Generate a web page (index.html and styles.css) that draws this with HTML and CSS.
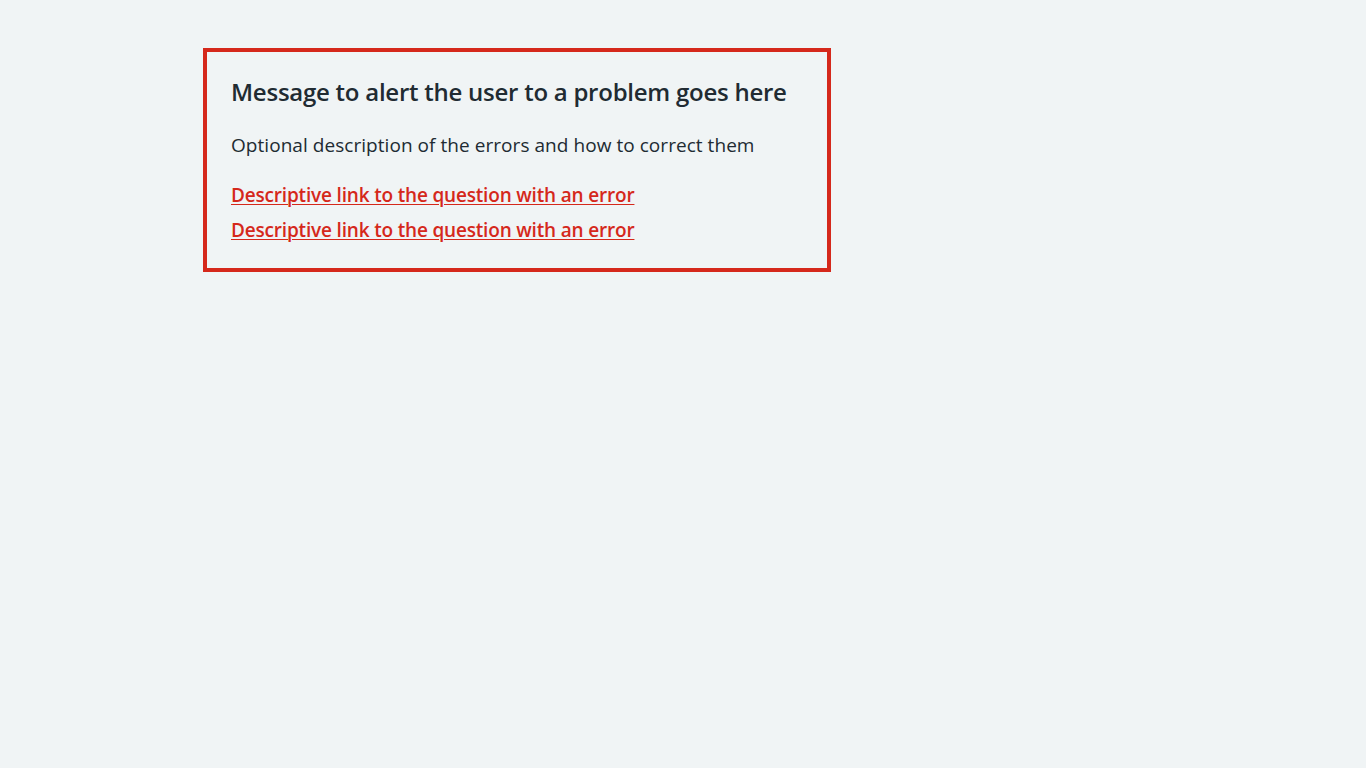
FILE: index.html
```html
<!DOCTYPE html>
<html lang="en">
<head>
<meta charset="utf-8">
<title>Error summary</title>
<link rel="stylesheet" href="styles.css">
</head>
<body>
<div class="width-container">
  <main class="main-wrapper">
    <div class="error-summary" role="alert" tabindex="-1">
      <h2 class="error-summary__title">Message to alert the user to a problem goes here</h2>
      <div class="error-summary__body">
        <p class="error-summary__text">Optional description of the errors and how to correct them</p>
        <ul class="error-summary__list">
          <li><a href="#" class="error-summary__link">Descriptive link to the question with an error</a></li>
          <li><a href="#" class="error-summary__link">Descriptive link to the question with an error</a></li>
        </ul>
      </div>
    </div>
  </main>
</div>
</body>
</html>
```
FILE: styles.css
```css
html, body {
  margin: 0;
  padding: 0;
  background: #f0f4f5;
}
body {
  font-family: "Open Sans", Lato, "Liberation Sans", sans-serif;
  color: #212b32;
}
.width-container {
  max-width: 960px;
  margin: 0 auto;
}
.main-wrapper {
  display: block;
  padding-top: 48px;
}
.error-summary {
  width: 628px;
  box-sizing: border-box;
  border: 4px solid #d5281b;
  padding: 24px;
}
.error-summary__title {
  margin: 0 0 23px;
  font-size: 24px;
  line-height: 32px;
  font-weight: 600;
  letter-spacing: -0.25px;
}
.error-summary__text {
  margin: 0 0 22px;
  font-size: 19px;
  line-height: 28px;
  font-weight: 400;
  letter-spacing: 0.05px;
}
.error-summary__list {
  list-style: none;
  margin: 0;
  padding: 0;
  display: flex;
  flex-direction: column;
  gap: 7px;
}
.error-summary__list li {
  font-size: 19px;
  line-height: 28px;
}
.error-summary__link {
  color: #d5281b;
  font-weight: 600;
  letter-spacing: -0.18px;
  text-decoration: underline;
  text-decoration-thickness: 1px;
  text-underline-offset: 2px;
}
```
